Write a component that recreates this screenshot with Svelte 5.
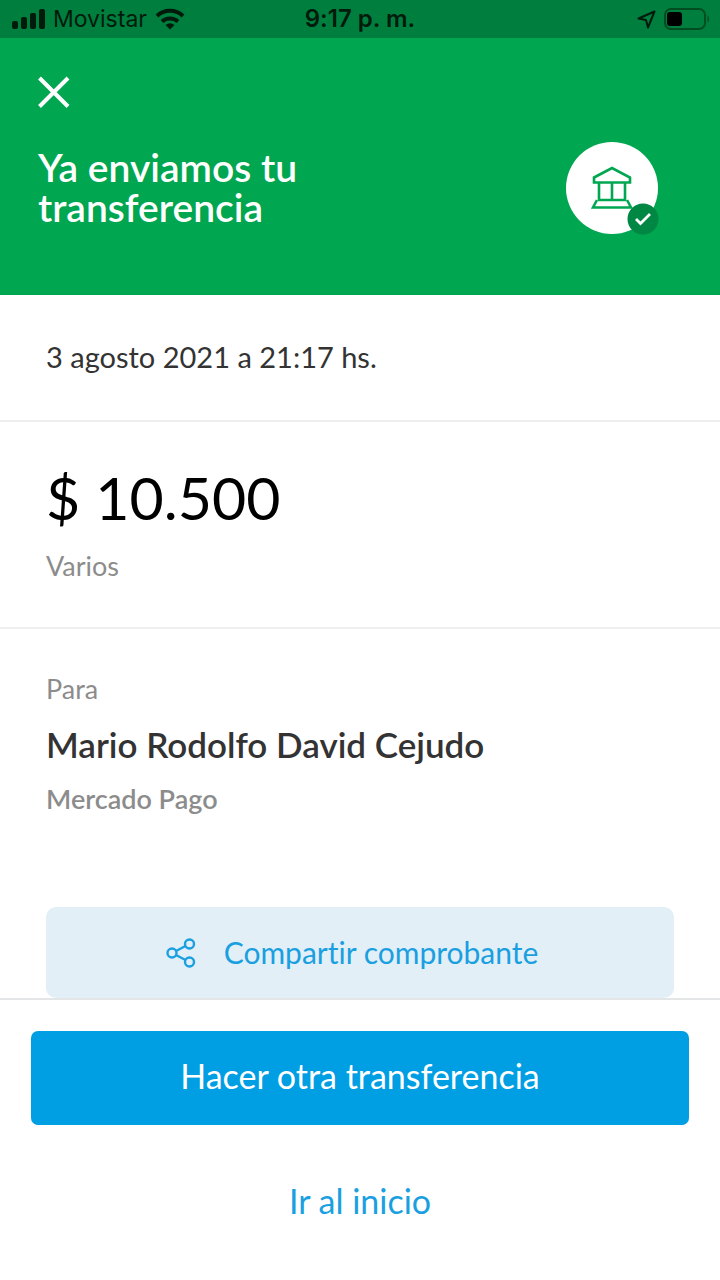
<script>
  const transfer = {
    date: '3 agosto 2021 a 21:17 hs.',
    amount: '$ 10.500',
    concept: 'Varios',
    recipient: 'Mario Rodolfo David Cejudo',
    bank: 'Mercado Pago'
  };
</script>

<div class="screen">
  <div class="status">
    <div class="carrier">
      <svg width="33" height="20" viewBox="0 0 33 20" aria-hidden="true">
        <rect x="0" y="12" width="6" height="8" rx="2" />
        <rect x="9" y="8" width="6" height="12" rx="2" />
        <rect x="18" y="4" width="6" height="16" rx="2" />
        <rect x="27" y="0" width="6" height="20" rx="2" />
      </svg>
      <span>Movistar</span>
      <svg width="30" height="22" viewBox="0 0 30 22" aria-hidden="true">
        <g fill="none" stroke="#001a0b" stroke-width="4">
          <path d="M2 8C9 1 21 1 28 8" />
          <path d="M7 13.500c4.500-4 11.500-4 16 0" />
        </g>
        <path d="M15 21.500l-4.500-4.500q4.500-3.500 9 0z" />
      </svg>
    </div>
    <div class="clock">9:17 p. m.</div>
    <div class="power">
      <svg width="19" height="19" viewBox="0 0 19 19" aria-hidden="true">
        <path d="M1.500 8.500L17.500 1.500L11 17.500L9 10Z" fill="none" stroke="#001a0b" stroke-width="2" stroke-linejoin="round" />
      </svg>
      <svg width="46" height="22" viewBox="0 0 46 22" aria-hidden="true">
        <rect x="1" y="1" width="40" height="20" rx="6" fill="none" stroke="#004d22" stroke-width="2" />
        <rect x="3" y="4" width="15" height="14" rx="3" fill="#000" />
        <path d="M43.500 7.500c2 1 2 6 0 7z" fill="#004d22" />
      </svg>
    </div>
  </div>

  <header>
    <button class="close" aria-label="Cerrar">
      <svg width="32" height="32" viewBox="0 0 32 32" aria-hidden="true">
        <path d="M1.500 2L30 30.500M30 2L1.500 30.500" stroke="#fff" stroke-width="4" />
      </svg>
    </button>
    <div class="heading">
      <h1>Ya enviamos tu transferencia</h1>
      <div class="emblem">
        <svg width="42" height="44" viewBox="0 0 42 44" fill="none" stroke="#00a650" stroke-width="2.600" aria-hidden="true">
          <path d="M3 11.500L21 2L39 11.500V16.500H3Z" />
          <path d="M8 17V34M21 17V34M34 17V34M7 34H35" />
          <path d="M6 34L2 41.500H40L36 34" />
        </svg>
        <svg class="tick" width="32" height="32" viewBox="0 0 32 32" aria-hidden="true">
          <circle cx="16" cy="16" r="15.500" fill="#008744" />
          <path d="M9 16L13.500 20.500L23 11" fill="none" stroke="#fff" stroke-width="2.800" />
        </svg>
      </div>
    </div>
  </header>

  <main>
    <section class="date">{transfer.date}</section>
    <section class="sum">
      <div class="amount">{transfer.amount}</div>
      <div class="note">{transfer.concept}</div>
    </section>
    <section class="to">
      <div class="note">Para</div>
      <h2>{transfer.recipient}</h2>
      <div class="note strong">{transfer.bank}</div>
      <button class="share">
        <svg width="30" height="30" viewBox="0 0 30 30" fill="none" stroke="#1a9fe0" stroke-width="2.400" aria-hidden="true">
          <circle cx="6" cy="15" r="4.500" />
          <circle cx="23.500" cy="6" r="4.500" />
          <circle cx="23.500" cy="24" r="4.500" />
          <path d="M10 13L19.500 8M10 17L19.500 22" />
        </svg>
        <span>Compartir comprobante</span>
      </button>
    </section>
  </main>

  <footer>
    <button class="primary">Hacer otra transferencia</button>
    <a class="home" href="#inicio">Ir al inicio</a>
  </footer>
</div>

<style>
  :global(body) { background: #fff; }
  .screen {
    min-height: 100vh;
    display: flex;
    flex-direction: column;
    box-sizing: border-box;
    color: #333;
    font-family: Lato, "Open Sans", sans-serif;
    font-variant-ligatures: none;
  }
  button { border: 0; margin: 0; padding: 0; font-family: inherit; font-variant-ligatures: inherit; cursor: pointer; }
  svg { display: block; flex: none; }
  .status {
    display: grid;
    grid-template-columns: 1fr auto 1fr;
    align-items: center;
    height: 38px;
    padding: 0 12px;
    box-sizing: border-box;
    background: #007e3e;
    color: #001a0b;
    fill: #001a0b;
    font-family: Inter, sans-serif;
    font-size: 23px;
    line-height: 38px;
  }
  .carrier { display: flex; align-items: center; gap: 8px; }
  .clock { font-size: 24px; font-weight: 600; }
  .power { display: flex; align-items: center; justify-content: flex-end; gap: 8px; margin-right: -2px; }
  header { background: #00a650; padding: 38px 62px 61px 38px; }
  .close { display: block; background: none; }
  .heading {
    display: flex;
    align-items: center;
    justify-content: space-between;
    margin-top: 34px;
  }
  h1 { margin: 0; padding-bottom: 2px; max-width: 300px; color: #fff; font-size: 39px; line-height: 40px; font-weight: 600; }
  .emblem {
    position: relative;
    flex: none;
    display: grid;
    place-items: center;
    width: 92px;
    height: 92px;
    border-radius: 50%;
    background: #fff;
  }
  .tick { position: absolute; right: -1px; bottom: -1px; }
  main { flex: 1; display: flex; flex-direction: column; }
  section { padding: 0 46px; border-bottom: 2px solid #eee; }
  .date { padding-top: 42px; padding-bottom: 43px; font-size: 29px; line-height: 40px; }
  .sum { padding-top: 41px; padding-bottom: 46px; }
  .amount { color: #000; font-size: 59px; line-height: 70px; }
  .note { font-size: 27px; line-height: 30px; color: #8c8c8c; }
  .sum .note { margin-top: 18px; }
  .to { flex: 1; display: flex; flex-direction: column; padding-top: 45px; border-bottom: 0; }
  h2 { margin: 20px 0; font-size: 35px; line-height: 40px; font-weight: 600; }
  .strong { font-weight: 600; }
  .share {
    display: flex;
    align-items: center;
    justify-content: center;
    gap: 28px;
    height: 91px;
    margin-top: auto;
    padding-right: 16px;
    border-radius: 10px;
    background: #e2eff7;
    color: #1a9fe0;
    font-size: 30px;
    line-height: 40px;
  }
  .share span { padding-bottom: 2px; }
  footer {
    display: flex;
    flex-direction: column;
    padding: 31px 31px 57px;
    border-top: 2px solid #e3e5e7;
    text-align: center;
  }
  .primary {
    height: 94px;
    padding-bottom: 4px;
    border-radius: 7px;
    background: #009ee3;
    color: #fff;
    font-size: 34px;
    line-height: 40px;
  }
  .home { align-self: center; margin-top: 54px; color: #1a9fe0; font-size: 34px; line-height: 44px; text-decoration: none; }
</style>
